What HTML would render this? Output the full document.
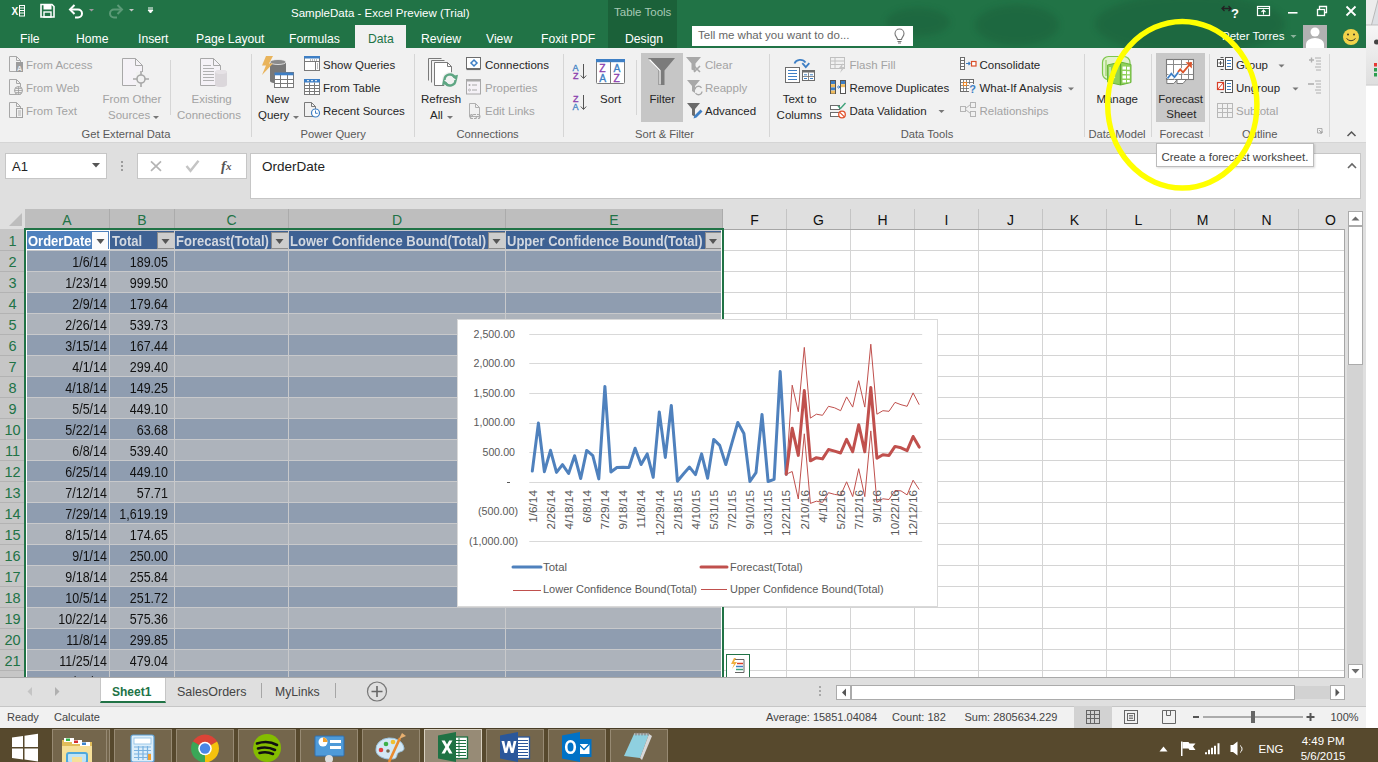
<!DOCTYPE html><html><head><meta charset="utf-8"><title>SampleData - Excel</title><style>
*{margin:0;padding:0;box-sizing:border-box}
html,body{width:1378px;height:762px;overflow:hidden;background:#fff}
body{position:relative;font-family:"Liberation Sans",sans-serif}
.a{position:absolute}
.t{position:absolute;white-space:nowrap;line-height:1}
svg{position:absolute;overflow:visible}
</style></head><body>
<svg class="a" style="left:1366px;top:0" width="12" height="90">
<rect x="0" y="0" width="12" height="25" fill="#ececec"/>
<path d="M5.5 25L12 0v25z" fill="#dde0e4"/>
<path d="M5.5 25L12 0" stroke="#b9b9b9" stroke-width="1"/>
<rect x="0" y="24.5" width="12" height="1.2" fill="#bdbdbd"/>
<defs><linearGradient id="rg" x1="0" y1="0" x2="0" y2="1"><stop offset="0" stop-color="#f6f6f6"/><stop offset="1" stop-color="#dedede"/></linearGradient></defs>
<rect x="0" y="25.7" width="12" height="59" fill="url(#rg)"/>
<rect x="0" y="84.5" width="12" height="1" fill="#c4c4c4"/>
<circle cx="10.5" cy="42" r="2.5" fill="#444"/>
<rect x="8" y="63" width="3" height="3.5" fill="#e53935"/>
<rect x="8" y="68" width="3" height="3.5" fill="#2e9e4f"/>
<rect x="8" y="73" width="3" height="3.5" fill="#2e9e4f"/>
</svg>
<div class="a" style="left:0;top:0;width:1366px;height:48px;background:#217346"></div>
<svg class="a" style="left:0;top:0" width="1366" height="48"><defs><filter id="bl" x="-50%" y="-50%" width="200%" height="200%"><feGaussianBlur stdDeviation="3"/></filter></defs>
<g fill="#174f30" opacity="0.28" filter="url(#bl)">
<ellipse cx="918" cy="22" rx="32" ry="14"/>
<ellipse cx="1017" cy="25" rx="42" ry="20"/>
<ellipse cx="1190" cy="24" rx="95" ry="30"/>
</g></svg>
<div class="a" style="left:608px;top:0;width:69px;height:48px;background:#1b6139"></div>
<div class="a" style="left:355px;top:25px;width:51px;height:23px;background:#f1f1f1"></div>
<div class="t" style="left:291px;top:7.8px;font-size:11.5px;color:#fff;font-weight:normal;">SampleData - Excel Preview (Trial)</div>
<div class="t" style="left:614px;top:7px;font-size:11.5px;color:#a8c9b5;font-weight:normal;">Table Tools</div>
<div class="t" style="left:20px;top:33px;font-size:12.2px;color:#fff;font-weight:normal;">File</div>
<div class="t" style="left:76px;top:33px;font-size:12.2px;color:#fff;font-weight:normal;">Home</div>
<div class="t" style="left:138px;top:33px;font-size:12.2px;color:#fff;font-weight:normal;">Insert</div>
<div class="t" style="left:196px;top:33px;font-size:12.2px;color:#fff;font-weight:normal;">Page Layout</div>
<div class="t" style="left:289px;top:33px;font-size:12.2px;color:#fff;font-weight:normal;">Formulas</div>
<div class="t" style="left:368px;top:33px;font-size:12.2px;color:#217346;font-weight:normal;">Data</div>
<div class="t" style="left:421px;top:33px;font-size:12.2px;color:#fff;font-weight:normal;">Review</div>
<div class="t" style="left:486px;top:33px;font-size:12.2px;color:#fff;font-weight:normal;">View</div>
<div class="t" style="left:541px;top:33px;font-size:12.2px;color:#fff;font-weight:normal;">Foxit PDF</div>
<div class="t" style="left:625px;top:33px;font-size:12.2px;color:#fff;font-weight:normal;">Design</div>
<div class="a" style="left:692px;top:26px;width:221px;height:20px;background:#fff"></div>
<div class="t" style="left:698px;top:30px;font-size:11.5px;color:#666;font-weight:normal;">Tell me what you want to do...</div>
<div class="t" style="left:1222px;top:31.47px;font-size:11.5px;color:#fff;font-weight:normal;">Peter Torres</div>
<div class="a" style="left:0;top:48px;width:1366px;height:95px;background:#f1f1f1;border-bottom:1px solid #d5d5d5"></div>
<div class="a" style="left:641px;top:53px;width:42px;height:69px;background:#c6c6c6"></div>
<div class="a" style="left:1156px;top:53px;width:49px;height:69px;background:#c8c8c8"></div>
<div class="t" style="left:26px;top:59.97px;font-size:11.5px;color:#a3a3a3;font-weight:normal;">From Access</div>
<div class="t" style="left:26px;top:82.97px;font-size:11.5px;color:#a3a3a3;font-weight:normal;">From Web</div>
<div class="t" style="left:26px;top:105.97px;font-size:11.5px;color:#a3a3a3;font-weight:normal;">From Text</div>
<div class="t" style="left:102.5px;top:93.97px;font-size:11.5px;color:#a3a3a3;font-weight:normal;">From Other</div>
<div class="t" style="left:108px;top:109.97px;font-size:11.5px;color:#a3a3a3;font-weight:normal;">Sources</div>
<div class="t" style="left:191.5px;top:93.97px;font-size:11.5px;color:#a3a3a3;font-weight:normal;">Existing</div>
<div class="t" style="left:177px;top:109.97px;font-size:11.5px;color:#a3a3a3;font-weight:normal;">Connections</div>
<div class="t" style="left:266px;top:93.97px;font-size:11.5px;color:#262626;font-weight:normal;">New</div>
<div class="t" style="left:258px;top:109.97px;font-size:11.5px;color:#262626;font-weight:normal;">Query</div>
<div class="t" style="left:323px;top:59.97px;font-size:11.5px;color:#262626;font-weight:normal;">Show Queries</div>
<div class="t" style="left:323px;top:82.97px;font-size:11.5px;color:#262626;font-weight:normal;">From Table</div>
<div class="t" style="left:323px;top:105.97px;font-size:11.5px;color:#262626;font-weight:normal;">Recent Sources</div>
<div class="t" style="left:421px;top:93.97px;font-size:11.5px;color:#262626;font-weight:normal;">Refresh</div>
<div class="t" style="left:430px;top:109.97px;font-size:11.5px;color:#262626;font-weight:normal;">All</div>
<div class="t" style="left:485px;top:59.97px;font-size:11.5px;color:#262626;font-weight:normal;">Connections</div>
<div class="t" style="left:485px;top:82.97px;font-size:11.5px;color:#a3a3a3;font-weight:normal;">Properties</div>
<div class="t" style="left:485px;top:105.97px;font-size:11.5px;color:#a3a3a3;font-weight:normal;">Edit Links</div>
<div class="t" style="left:600px;top:93.97px;font-size:11.5px;color:#262626;font-weight:normal;">Sort</div>
<div class="t" style="left:649.5px;top:93.97px;font-size:11.5px;color:#262626;font-weight:normal;">Filter</div>
<div class="t" style="left:705px;top:59.97px;font-size:11.5px;color:#a3a3a3;font-weight:normal;">Clear</div>
<div class="t" style="left:705px;top:82.97px;font-size:11.5px;color:#a3a3a3;font-weight:normal;">Reapply</div>
<div class="t" style="left:705px;top:105.97px;font-size:11.5px;color:#262626;font-weight:normal;">Advanced</div>
<div class="t" style="left:782.7px;top:93.97px;font-size:11.5px;color:#262626;font-weight:normal;">Text to</div>
<div class="t" style="left:776.6px;top:109.97px;font-size:11.5px;color:#262626;font-weight:normal;">Columns</div>
<div class="t" style="left:849.5px;top:59.97px;font-size:11.5px;color:#a3a3a3;font-weight:normal;">Flash Fill</div>
<div class="t" style="left:849.5px;top:82.97px;font-size:11.5px;color:#262626;font-weight:normal;">Remove Duplicates</div>
<div class="t" style="left:849.5px;top:105.97px;font-size:11.5px;color:#262626;font-weight:normal;">Data Validation</div>
<div class="t" style="left:979.5px;top:59.97px;font-size:11.5px;color:#262626;font-weight:normal;">Consolidate</div>
<div class="t" style="left:979.5px;top:82.97px;font-size:11.5px;color:#262626;font-weight:normal;">What-If Analysis</div>
<div class="t" style="left:979.5px;top:105.97px;font-size:11.5px;color:#a3a3a3;font-weight:normal;">Relationships</div>
<div class="t" style="left:1096.4px;top:93.97px;font-size:11.5px;color:#262626;font-weight:normal;">Manage</div>
<div class="t" style="left:1158.3px;top:93.97px;font-size:11.5px;color:#262626;font-weight:normal;">Forecast</div>
<div class="t" style="left:1166.3px;top:108.97px;font-size:11.5px;color:#262626;font-weight:normal;">Sheet</div>
<div class="t" style="left:1236px;top:59.97px;font-size:11.5px;color:#262626;font-weight:normal;">Group</div>
<div class="t" style="left:1236px;top:82.97px;font-size:11.5px;color:#262626;font-weight:normal;">Ungroup</div>
<div class="t" style="left:1236px;top:105.97px;font-size:11.5px;color:#a3a3a3;font-weight:normal;">Subtotal</div>
<div class="t" style="left:81.5px;top:129.22px;font-size:11.2px;color:#595959;font-weight:normal;">Get External Data</div>
<div class="t" style="left:300.6px;top:129.22px;font-size:11.2px;color:#595959;font-weight:normal;">Power Query</div>
<div class="t" style="left:456.5px;top:129.22px;font-size:11.2px;color:#595959;font-weight:normal;">Connections</div>
<div class="t" style="left:635px;top:129.22px;font-size:11.2px;color:#595959;font-weight:normal;">Sort &amp; Filter</div>
<div class="t" style="left:900.7px;top:129.22px;font-size:11.2px;color:#595959;font-weight:normal;">Data Tools</div>
<div class="t" style="left:1088.4px;top:129.22px;font-size:11.2px;color:#595959;font-weight:normal;">Data Model</div>
<div class="t" style="left:1159.5px;top:129.22px;font-size:11.2px;color:#595959;font-weight:normal;">Forecast</div>
<div class="t" style="left:1242px;top:129.22px;font-size:11.2px;color:#595959;font-weight:normal;">Outline</div>
<svg class="a" style="left:0;top:0" width="1366" height="200">
<text x="11.5" y="15" font-family="Liberation Sans" font-weight="bold" font-size="10" fill="#fff">X</text>
<rect x="19.5" y="5.5" width="5" height="10.5" fill="none" stroke="#fff" stroke-width="1"/>
<path d="M19.5 8h5M19.5 10.5h5M19.5 13h5" stroke="#fff" stroke-width="1"/>
<path d="M41 4.5h11l2 2v10.5h-13z" fill="none" stroke="#fff" stroke-width="1.6"/>
<rect x="43.5" y="5" width="8" height="4.5" fill="#fff"/>
<rect x="44" y="12" width="7" height="5" fill="none" stroke="#fff" stroke-width="1.4"/>
<path d="M71 9.5h7a4 4 0 0 1 0 8h-3" fill="none" stroke="#fff" stroke-width="2"/>
<path d="M74.5 5l-4.5 4.5 4.5 4.5" fill="none" stroke="#fff" stroke-width="2"/>
<path d="M89 9h5l-2.5 2.5z" fill="#a09aa0"/>
<path d="M121 9.5h-7a4 4 0 0 0 0 8h3" fill="none" stroke="#5c9a77" stroke-width="2"/>
<path d="M117.5 5l4.5 4.5-4.5 4.5" fill="none" stroke="#5c9a77" stroke-width="2"/>
<path d="M129 9h5l-2.5 2.5z" fill="#c8c8c8"/>
<path d="M148 8h5M148 10h5l-2.5 3z" stroke="#fff" fill="#fff" stroke-width="1"/>
<path d="M1222 8.5h9M1224.5 6l-2.5 2.5 2.5 2.5M1228.5 6l2.5 2.5-2.5 2.5" fill="none" stroke="#222" stroke-width="1.3"/>
<text x="1231" y="17.5" font-family="Liberation Sans" font-weight="bold" font-size="13" fill="#fff">?</text>
<rect x="1257.5" y="6.5" width="12" height="9" fill="none" stroke="#fff" stroke-width="1.2"/>
<path d="M1257.5 8.5h12M1263.5 14.5v-4M1261.5 12l2-2 2 2" fill="none" stroke="#fff" stroke-width="1.1"/>
<rect x="1288" y="12" width="9.5" height="1.6" fill="#fff"/>
<rect x="1317.5" y="9.5" width="7" height="6" fill="none" stroke="#fff" stroke-width="1.3"/>
<path d="M1319.5 9.5v-3h7v6h-2" fill="none" stroke="#fff" stroke-width="1.3"/>
<path d="M1346.5 6.5l9 9M1355.5 6.5l-9 9" stroke="#fff" stroke-width="1.8"/>
<rect x="1303" y="25" width="24" height="23" fill="#b1b1b1"/>
<circle cx="1315" cy="32" r="4.5" fill="#fff"/>
<path d="M1306 48v-4a9 6 0 0 1 18 0v4z" fill="#fff"/>
<path d="M1290.5 35h6l-3 3z" fill="#8bb39c"/>
<circle cx="1351" cy="37" r="8" fill="#f2d34a"/>
<circle cx="1348" cy="34.5" r="1" fill="#3a3a2a"/><circle cx="1354" cy="34.5" r="1" fill="#3a3a2a"/>
<path d="M1346.5 38.5q4.5 4.5 9 0" fill="none" stroke="#3a3a2a" stroke-width="1"/>
<path d="M897.5 39.5c0-2-2.5-3-2.5-6a4.5 4.5 0 0 1 9 0c0 3-2.5 4-2.5 6z" fill="none" stroke="#777" stroke-width="1.1"/>
<path d="M897.5 41.5h4M898 43h3" stroke="#777" stroke-width="1"/>
<line x1="251.5" y1="54" x2="251.5" y2="137" stroke="#d6d6d6" stroke-width="1"/>
<line x1="170.5" y1="60" x2="170.5" y2="115" stroke="#d6d6d6" stroke-width="1"/>
<line x1="414.5" y1="54" x2="414.5" y2="137" stroke="#d6d6d6" stroke-width="1"/>
<line x1="563.5" y1="54" x2="563.5" y2="137" stroke="#d6d6d6" stroke-width="1"/>
<line x1="636.5" y1="60" x2="636.5" y2="115" stroke="#d6d6d6" stroke-width="1"/>
<line x1="769.5" y1="54" x2="769.5" y2="137" stroke="#d6d6d6" stroke-width="1"/>
<line x1="1084.5" y1="54" x2="1084.5" y2="137" stroke="#d6d6d6" stroke-width="1"/>
<line x1="1151.5" y1="54" x2="1151.5" y2="137" stroke="#d6d6d6" stroke-width="1"/>
<line x1="1209.5" y1="54" x2="1209.5" y2="137" stroke="#d6d6d6" stroke-width="1"/>
<line x1="1329.5" y1="54" x2="1329.5" y2="137" stroke="#d6d6d6" stroke-width="1"/>
<path d="M9.5 56.5h7l4 4v11h-11z M16.5 56.5v4h4" fill="none" stroke="#a8a8a8" stroke-width="1"/>
<rect x="16" y="62" width="7" height="10" fill="#9c9c9c"/>
<text x="17" y="70.5" font-family="Liberation Sans" font-size="7" font-weight="bold" fill="#eee">A</text>
<path d="M9.5 79.5h7l4 4v11h-11z M16.5 79.5v4h4" fill="none" stroke="#a8a8a8" stroke-width="1"/>
<circle cx="18.5" cy="90.5" r="4" fill="#f1f1f1" stroke="#a0a0a0" stroke-width="1"/>
<path d="M14.5 90.5h8M18.5 86.5v8M15.5 88.5h6M15.5 92.5h6" stroke="#a0a0a0" stroke-width=".8" fill="none"/>
<path d="M9.5 102.5h7l4 4v11h-11z M16.5 102.5v4h4" fill="none" stroke="#a8a8a8" stroke-width="1"/>
<rect x="16.5" y="108.5" width="6" height="9" fill="#f1f1f1" stroke="#a0a0a0" stroke-width="1"/>
<path d="M18 111h3M18 113h3M18 115h3" stroke="#a0a0a0" stroke-width=".8"/>
<path d="M122.5 58.5h13l7 7v20h-20z" fill="#f5f2f7" stroke="#a8a8a8" stroke-width="1"/>
<path d="M135.5 58.5v7h7" fill="none" stroke="#a8a8a8" stroke-width="1"/>
<rect x="136" y="72" width="12" height="14" fill="#f1f1f1"/>
<circle cx="141" cy="79" r="4" fill="#f1f1f1" stroke="#a8a8a8" stroke-width="1.6"/>
<path d="M133 79h4M145 79h4M141 71v4M141 83v4" stroke="#a8a8a8" stroke-width="1.6"/>
<path d="M200.5 58.5h13l7 7v20h-20z" fill="#f5f2f7" stroke="#a8a8a8" stroke-width="1"/>
<path d="M213.5 58.5v7h7" fill="none" stroke="#a8a8a8" stroke-width="1"/>
<path d="M203 65.5h8M203 68.5h11M203 71.5h11M203 74.5h11M203 77.5h11M203 80.5h11" stroke="#a8a8a8" stroke-width="0.9"/>
<path d="M215 72a6 2 0 0 1 12 0v13a6 2 0 0 1 -12 0z" fill="#dbd7db"/>
<ellipse cx="221" cy="72" rx="6" ry="2" fill="#e6e2e6"/>
<path d="M270 62v19a8 2.5 0 0 0 16 0v-19z" fill="#787878"/>
<ellipse cx="278" cy="62" rx="8" ry="2.5" fill="#8a8a8a" stroke="#f1f1f1" stroke-width=".8"/>
<path d="M266 56h7l-4 7.5h4l-11 11.5 4-9.5h-4z" fill="#e9b45c"/>
<rect x="274.5" y="72.5" width="19" height="15" fill="#fff" stroke="#7a7a7a" stroke-width="1"/>
<rect x="274.5" y="72.5" width="19" height="2.8" fill="#3e7fc5"/>
<path d="M274.5 79.5h19M274.5 83.5h19M280.5 75v12.5M287.5 75v12.5" stroke="#7a7a7a" stroke-width="1"/>
<rect x="304.5" y="56.5" width="15" height="14" fill="#fff" stroke="#7a7a7a" stroke-width="1"/>
<rect x="304" y="56" width="16" height="2.5" fill="#3e7fc5"/>
<path d="M304.5 61.5h15M315.5 61.5v9M310 60h1M312 60h1M314 60h1M316 60h1M317 64h1M317 66h1M317 68h1" stroke="#7a7a7a" stroke-width="1"/>
<rect x="304.5" y="79.5" width="15" height="15" fill="#fff" stroke="#7a7a7a" stroke-width="1"/>
<rect x="304" y="79" width="16" height="3.5" fill="#3e7fc5"/>
<path d="M307 80.7h2M311 80.7h2M315 80.7h2" stroke="#fff" stroke-width="1"/>
<path d="M304.5 85.5h15M304.5 88.5h15M304.5 91.5h15M309.5 82.5v12M314.5 82.5v12" stroke="#7a7a7a" stroke-width="1"/>
<path d="M304.5 102.5h7l4 4v10h-11z M311.5 102.5v4h4" fill="none" stroke="#7a7a7a" stroke-width="1"/>
<circle cx="315.5" cy="113" r="4" fill="#fff" stroke="#3e7fc5" stroke-width="1.2"/>
<path d="M315.5 110.5v2.8h2.2" fill="none" stroke="#3e7fc5" stroke-width="1"/>
<path d="M428.5 58.5h13M428.5 58.5v22" fill="none" stroke="#7a7a7a" stroke-width="1"/>
<path d="M431.5 60.5h13M431.5 60.5v22" fill="none" stroke="#7a7a7a" stroke-width="1"/>
<path d="M434.5 62.5h13l4 4v19h-17z" fill="#fff" stroke="#7a7a7a" stroke-width="1"/>
<path d="M447.5 62.5v4h4" fill="none" stroke="#7a7a7a" stroke-width="1"/>
<circle cx="450" cy="80" r="7" fill="#f1f1f1"/>
<circle cx="450" cy="80" r="8" fill="#f1f1f1"/>
<path d="M444.5 80a5.5 5.5 0 0 1 10.3-2.7" fill="none" stroke="#5ea683" stroke-width="2.4"/>
<path d="M455.5 80a5.5 5.5 0 0 1 -10.3 2.7" fill="none" stroke="#5ea683" stroke-width="2.4"/>
<path d="M452 76.3l6-1.5 -1.2 6z" fill="#5ea683"/>
<path d="M448 83.7l-6 1.5 1.2-6z" fill="#5ea683"/>
<rect x="466.5" y="57.5" width="14" height="11" fill="#fff" stroke="#6d6d6d" stroke-width="1"/>
<path d="M466.5 69.5h14" stroke="#6d6d6d" stroke-width="1.2"/>
<path d="M474 60l3 3-3 3-3-3z" fill="none" stroke="#3e7fc5" stroke-width="1.5"/>
<rect x="466.5" y="79.5" width="14" height="14.5" fill="#f5f2f7" stroke="#a8a8a8" stroke-width="1"/>
<rect x="466.5" y="79.5" width="14" height="2" fill="#a8a8a8"/>
<circle cx="469.5" cy="85" r="1" fill="#a8a8a8"/><circle cx="469.5" cy="90" r="1" fill="none" stroke="#a8a8a8" stroke-width=".8"/>
<path d="M472 85h5M472 90h5" stroke="#a8a8a8" stroke-width="1"/>
<path d="M469.5 103.5h6l4 4v9h-10z M475.5 103.5v4h4" fill="none" stroke="#b0b0b0" stroke-width="1"/>
<path d="M472 116.5a2 2 0 0 1 2-2h2M478 116.5a2 2 0 0 0 -2 2h-2M473 118.5h-1a2 2 0 0 1 0-4M477 114.5h1a2 2 0 0 1 0 4" fill="none" stroke="#a8a8a8" stroke-width="1.1"/>
<text x="572.6" y="70.8" font-family="Liberation Sans" font-size="9" stroke="#3e7fc5" stroke-width=".3" fill="#3e7fc5">A</text>
<text x="573" y="78.8" font-family="Liberation Sans" font-size="9" stroke="#8b3fae" stroke-width=".3" fill="#8b3fae">Z</text>
<path d="M583.5 64v14M580.8 75.5l2.7 3 2.7-3" fill="none" stroke="#555" stroke-width="1"/>
<text x="573" y="102" font-family="Liberation Sans" font-size="9" stroke="#8b3fae" stroke-width=".3" fill="#8b3fae">Z</text>
<text x="572.6" y="110" font-family="Liberation Sans" font-size="9" stroke="#3e7fc5" stroke-width=".3" fill="#3e7fc5">A</text>
<path d="M583.5 95v14M580.8 106.5l2.7 3 2.7-3" fill="none" stroke="#555" stroke-width="1"/>
<rect x="596.5" y="59.5" width="28" height="24" rx="1" fill="#fff" stroke="#7a7a7a" stroke-width="1"/>
<rect x="596" y="59" width="29" height="3.2" fill="#3e7fc5"/>
<path d="M610.5 62v21.5" stroke="#7a7a7a" stroke-width="1"/>
<text x="599.3" y="72" font-family="Liberation Sans" font-size="10.3" stroke="#8b3fae" stroke-width="0.35" fill="#8b3fae">Z</text>
<text x="599.3" y="82.2" font-family="Liberation Sans" font-size="10.3" stroke="#3e7fc5" stroke-width="0.35" fill="#3e7fc5">A</text>
<text x="613.5" y="72" font-family="Liberation Sans" font-size="10.3" stroke="#3e7fc5" stroke-width="0.35" fill="#3e7fc5">A</text>
<text x="613.5" y="82.2" font-family="Liberation Sans" font-size="10.3" stroke="#8b3fae" stroke-width="0.35" fill="#8b3fae">Z</text>
<path d="M648 58h27l-10.5 12.5v14.5h-6v-14.5z" fill="#7b7b7b"/>
<path d="M649.5 59.5l10.5 11v14" fill="none" stroke="#fff" stroke-width="1.2"/>
<path d="M686 57h15l-5.5 6.5v8l-4-2v-6z" fill="#a8a8a8"/>
<path d="M694 66l6 6M700 66l-6 6" stroke="#a8a8a8" stroke-width="1.6"/>
<path d="M687 80h13l-5 6v7l-3-2v-5z" fill="#a8a8a8"/>
<path d="M695 89.5a3.5 3.5 0 0 1 6.5-1.5M702 91.5a3.5 3.5 0 0 1 -6.5 1.5" fill="none" stroke="#a8a8a8" stroke-width="1.3"/>
<path d="M687 103h13l-5 6v8l-3-2v-6z" fill="#6b6b6b"/>
<path d="M693.5 118.5l1-3 6-6 2 2-6 6z" fill="#3e7fc5"/>
<rect x="785.5" y="67.5" width="14" height="15" fill="#fff" stroke="#6d6d6d" stroke-width="1"/>
<path d="M788 70.5h9M788 73.5h9M788 76.5h9M788 79.5h9" stroke="#3e7fc5" stroke-width="1"/>
<rect x="802.5" y="70.5" width="12" height="10" fill="#fff" stroke="#6d6d6d" stroke-width="1"/>
<rect x="802.5" y="70.5" width="12" height="2" fill="#6d6d6d"/>
<path d="M808.5 72.5v8M802.5 76.5h12" stroke="#6d6d6d" stroke-width=".8"/>
<path d="M804 74.8h3M810 74.8h3M804 78.5h3M810 78.5h3" stroke="#3e7fc5" stroke-width="1"/>
<path d="M794.5 63.5a6 5 0 0 1 11 -1" fill="none" stroke="#3e7fc5" stroke-width="1.8"/>
<path d="M802.3 63.2l3.5 4 3.5-4" fill="none" stroke="#3e7fc5" stroke-width="1.8"/>
<rect x="830.5" y="57.5" width="14" height="11" fill="none" stroke="#c0c0c0" stroke-width="1"/>
<path d="M830.5 61h14M830.5 64.5h14M835 57.5v11" stroke="#c0c0c0" stroke-width="1"/>
<path d="M843 63l-4 5h3l-2 5 5-6h-3z" fill="#c4c4c4"/>
<rect x="830.5" y="80.5" width="5" height="13" fill="#fff" stroke="#555" stroke-width="1"/>
<rect x="831" y="81" width="4" height="3" fill="#3e7fc5"/><rect x="831" y="84.2" width="4" height="3" fill="#f0bc5e"/><rect x="831" y="87.4" width="4" height="3" fill="#3e7fc5"/><rect x="831" y="90.6" width="4" height="3" fill="#f0bc5e"/>
<rect x="840.5" y="80.5" width="5" height="13" fill="#fff" stroke="#555" stroke-width="1"/>
<rect x="841" y="81" width="4" height="3" fill="#3e7fc5"/><rect x="841" y="84.2" width="4" height="3" fill="#f0bc5e"/>
<path d="M837 87h3M838.5 85.5l1.5 1.5-1.5 1.5" fill="none" stroke="#3e7fc5" stroke-width="1"/>
<rect x="830.5" y="105.5" width="9" height="4" fill="#fff" stroke="#6d6d6d" stroke-width="1"/>
<rect x="830.5" y="112.5" width="9" height="4" fill="#fff" stroke="#6d6d6d" stroke-width="1"/>
<path d="M838 106l2.5 2.5 5-5.5" fill="none" stroke="#3fa37a" stroke-width="1.4"/>
<circle cx="842" cy="114.5" r="3.3" fill="#fff" stroke="#e0502a" stroke-width="1.3"/>
<path d="M839.8 112.3l4.4 4.4" stroke="#e0502a" stroke-width="1.2"/>
<rect x="960.5" y="57.5" width="4" height="12" fill="#fff" stroke="#6d6d6d" stroke-width="1"/>
<path d="M960.5 60.5h4M960.5 63.5h4M960.5 66.5h4" stroke="#6d6d6d" stroke-width="1"/>
<path d="M966 63.5h4M968.5 62l1.5 1.5-1.5 1.5" fill="none" stroke="#3e7fc5" stroke-width="1.1"/>
<rect x="971.5" y="61.5" width="4.5" height="4.5" fill="#fff" stroke="#d9502a" stroke-width="1.2"/>
<rect x="960.5" y="79.5" width="13" height="12" fill="#fff" stroke="#6d6d6d" stroke-width="1"/>
<path d="M960.5 82.5h13M960.5 85.5h13M960.5 88.5h13M963.5 79.5v12M966.5 79.5v12M969.5 79.5v12" stroke="#6d6d6d" stroke-width=".8"/>
<rect x="963.5" y="82.5" width="3" height="3" fill="#fff" stroke="#e8862a" stroke-width="1.1"/>
<rect x="969" y="84" width="8" height="11" fill="#f1f1f1"/>
<text x="969.3" y="93" font-family="Liberation Sans" font-weight="bold" font-size="11" fill="#3e7fc5">?</text>
<rect x="960.5" y="106.5" width="5" height="5" fill="none" stroke="#b4b4b4" stroke-width="1"/>
<rect x="970.5" y="102.5" width="5" height="5" fill="none" stroke="#b4b4b4" stroke-width="1"/>
<rect x="970.5" y="111.5" width="5" height="5" fill="none" stroke="#b4b4b4" stroke-width="1"/>
<path d="M965.5 108.5l5-4M965.5 109.5l5 4" stroke="#b4b4b4" stroke-width="1"/>
<rect x="1102.5" y="56.5" width="27.5" height="23" rx="6" fill="#e2f2cf" stroke="#7ec64e" stroke-width="1.2"/>
<path d="M1106 60v16" stroke="#b5de8e" stroke-width="2"/>
<path d="M1107.5 65l13-3 10.5 2.5v18l-10.5 2.5-13-3z" fill="#8fd05a" stroke="#6ab63a" stroke-width="1"/>
<path d="M1120.5 62v23" stroke="#5aa92e" stroke-width="1.4"/>
<path d="M1122.5 66.5h3.5v3h-3.5zM1127 66.8h2.8v3h-2.8zM1122.5 71h3.5v3h-3.5zM1127 71.2h2.8v3h-2.8zM1122.5 75.5h3.5v3h-3.5zM1127 75.6h2.8v3h-2.8zM1122.5 80h3.5v2.5h-3.5zM1127 80h2.8v2.3h-2.8z" fill="#fff"/>
<path d="M1110 67v8a3 3 0 0 0 5 2" fill="none" stroke="#e8f5da" stroke-width="1.2"/>
<rect x="1166.5" y="59.5" width="27" height="20" fill="#fff" stroke="#7a7a7a" stroke-width="1.1"/>
<path d="M1166.5 64.5h27M1166.5 74.5h27M1173.5 59.5v20M1181.5 59.5v20M1188.5 59.5v20" stroke="#8a8a8a" stroke-width="1"/>
<path d="M1166.8 80v3.5h7l3-3.5M1177 80v3.5h6l3-3.5" fill="#fff" stroke="#7a7a7a" stroke-width="1"/>
<path d="M1167.5 78.5l3.8-4.8 3.2 3.5 3.8-5" fill="none" stroke="#fff" stroke-width="3.4"/>
<path d="M1178 72l2.2-2.6 2.8 3 8.5-10" fill="none" stroke="#fff" stroke-width="3.4"/>
<path d="M1167.5 78.5l3.8-4.8 3.2 3.5 3.8-5" fill="none" stroke="#3e7fc5" stroke-width="1.8"/>
<path d="M1178 72l2.2-2.6 2.8 3 8.5-10" fill="none" stroke="#d9542b" stroke-width="1.8"/>
<path d="M1185.5 62.3h6.3v6.3z" fill="#d9542b"/>
<rect x="1217.5" y="59.5" width="6" height="7" fill="#fff" stroke="#555" stroke-width="1"/>
<path d="M1218.5 63h4M1220.5 61v4" stroke="#555" stroke-width="1"/>
<path d="M1220.5 57.5h3M1220.5 69.5h3" stroke="#555" stroke-width="1"/>
<rect x="1225.5" y="57.5" width="7" height="12" fill="#fff" stroke="#555" stroke-width="1"/>
<path d="M1227 60.5h4M1227 63.5h4M1227 66.5h4" stroke="#3e7fc5" stroke-width="1"/>
<rect x="1217.5" y="82.5" width="6" height="7" fill="#fff" stroke="#d9402a" stroke-width="1.2"/>
<path d="M1218 89l5-6" stroke="#d9402a" stroke-width="1"/>
<path d="M1220.5 80.5h3M1220.5 92.5h3" stroke="#555" stroke-width="1"/>
<rect x="1225.5" y="80.5" width="7" height="12" fill="#fff" stroke="#555" stroke-width="1"/>
<path d="M1227 83.5h4M1227 86.5h4M1227 89.5h4" stroke="#3e7fc5" stroke-width="1"/>
<rect x="1217.5" y="103.5" width="15" height="14" fill="none" stroke="#b8b8b8" stroke-width="1"/>
<path d="M1222.5 103.5v14M1227.5 103.5v14M1217.5 108.5h15M1217.5 112.5h15" stroke="#b8b8b8" stroke-width="1"/>
<path d="M1309 60h5M1311.5 57.5v5" stroke="#b0b0b0" stroke-width="1.4"/>
<path d="M1315 58h6M1316 61h5M1316 64h5M1315 67h6M1316 70h5" stroke="#b0b0b0" stroke-width="1"/>
<path d="M1308 84h6" stroke="#b0b0b0" stroke-width="1.6"/>
<path d="M1315 81h6M1316 84h5M1316 87h5M1315 90h6M1316 93h5" stroke="#b0b0b0" stroke-width="1"/>
<path d="M1317.5 128.5h4.5v4.5h-4.5z" fill="none" stroke="#a0a0a0" stroke-width=".8"/>
<path d="M1319 130l3 3M1322 131v2h-2" fill="none" stroke="#a0a0a0" stroke-width=".9"/>
<path d="M1347.5 136l4-4 4 4" fill="none" stroke="#555" stroke-width="1.5"/>
<path d="M153 116h6l-3 3z" fill="#777"/>
<path d="M293 116h6l-3 3z" fill="#777"/>
<path d="M447 116h6l-3 3z" fill="#777"/>
<path d="M938.5 110h6l-3 3z" fill="#777"/>
<path d="M1068 87.5h6l-3 3z" fill="#777"/>
<path d="M1278.5 64.5h6l-3 3z" fill="#777"/>
<path d="M1292.5 87.5h6l-3 3z" fill="#777"/>
</svg>
<div class="a" style="left:0;top:143px;width:1366px;height:66px;background:#dfdfdf"></div>
<div class="a" style="left:5px;top:153px;width:102px;height:26px;background:#fff;border:1px solid #c6c6c6"></div>
<div class="t" style="left:12px;top:160px;font-size:13px;color:#222;font-weight:normal;">A1</div>
<div class="a" style="left:137px;top:153px;width:110px;height:26px;background:#fff;border:1px solid #c6c6c6"></div>
<div class="a" style="left:250px;top:153px;width:1111px;height:46px;background:#fff;border:1px solid #c6c6c6"></div>
<div class="t" style="left:262px;top:159.5px;font-size:13.5px;color:#222;font-weight:normal;">OrderDate</div>
<svg class="a" style="left:0;top:140px" width="1366" height="70">
<path d="M92 25h8l-4 4.5z" fill="#555" transform="translate(0,-2)"/>
<rect x="121" y="21" width="2" height="2" fill="#9c9c9c"/>
<rect x="121" y="25" width="2" height="2" fill="#9c9c9c"/>
<rect x="121" y="29" width="2" height="2" fill="#9c9c9c"/>
<path d="M151 21.3l10 9.5M161 21.3l-10 9.5" stroke="#b4b4b4" stroke-width="1.7"/>
<path d="M186.5 26l4 4.8 8-10" fill="none" stroke="#c4c4c4" stroke-width="2.4"/>
<text x="221" y="30.5" font-family="Liberation Serif" font-style="italic" font-weight="bold" font-size="14.5" fill="#555">f</text>
<text x="226" y="29.5" font-family="Liberation Serif" font-style="italic" font-weight="bold" font-size="11" fill="#555">x</text>
<path d="M1348 28l4-4 4 4" fill="none" stroke="#666" stroke-width="1.6"/>
</svg>
<svg class="a" style="left:0;top:0" width="1366" height="762" shape-rendering="crispEdges">
<rect x="0" y="209" width="1345" height="20" fill="#dfdfdf"/>
<rect x="25" y="209" width="698" height="20" fill="#bebebe"/>
<polygon points="9,226 22,226 22,213" fill="#bdbdbd" shape-rendering="auto"/>
<rect x="109" y="209" width="1" height="20" fill="#ababab"/>
<rect x="174" y="209" width="1" height="20" fill="#ababab"/>
<rect x="288" y="209" width="1" height="20" fill="#ababab"/>
<rect x="505" y="209" width="1" height="20" fill="#ababab"/>
<rect x="722" y="209" width="1" height="20" fill="#ababab"/>
<rect x="786" y="209" width="1" height="20" fill="#c4c4c4"/>
<rect x="850" y="209" width="1" height="20" fill="#c4c4c4"/>
<rect x="914" y="209" width="1" height="20" fill="#c4c4c4"/>
<rect x="978" y="209" width="1" height="20" fill="#c4c4c4"/>
<rect x="1042" y="209" width="1" height="20" fill="#c4c4c4"/>
<rect x="1106" y="209" width="1" height="20" fill="#c4c4c4"/>
<rect x="1170" y="209" width="1" height="20" fill="#c4c4c4"/>
<rect x="1234" y="209" width="1" height="20" fill="#c4c4c4"/>
<rect x="1298" y="209" width="1" height="20" fill="#c4c4c4"/>
<rect x="24" y="209" width="1" height="20" fill="#dfdfdf"/>
<rect x="723" y="229" width="622" height="1" fill="#a6a6a6"/>
<rect x="0" y="229" width="24" height="449" fill="#c6c6c6"/>
<rect x="0" y="250" width="24" height="1" fill="#b3b3b3"/>
<rect x="0" y="271" width="24" height="1" fill="#b3b3b3"/>
<rect x="0" y="292" width="24" height="1" fill="#b3b3b3"/>
<rect x="0" y="313" width="24" height="1" fill="#b3b3b3"/>
<rect x="0" y="334" width="24" height="1" fill="#b3b3b3"/>
<rect x="0" y="355" width="24" height="1" fill="#b3b3b3"/>
<rect x="0" y="376" width="24" height="1" fill="#b3b3b3"/>
<rect x="0" y="397" width="24" height="1" fill="#b3b3b3"/>
<rect x="0" y="418" width="24" height="1" fill="#b3b3b3"/>
<rect x="0" y="439" width="24" height="1" fill="#b3b3b3"/>
<rect x="0" y="460" width="24" height="1" fill="#b3b3b3"/>
<rect x="0" y="481" width="24" height="1" fill="#b3b3b3"/>
<rect x="0" y="502" width="24" height="1" fill="#b3b3b3"/>
<rect x="0" y="523" width="24" height="1" fill="#b3b3b3"/>
<rect x="0" y="544" width="24" height="1" fill="#b3b3b3"/>
<rect x="0" y="565" width="24" height="1" fill="#b3b3b3"/>
<rect x="0" y="586" width="24" height="1" fill="#b3b3b3"/>
<rect x="0" y="607" width="24" height="1" fill="#b3b3b3"/>
<rect x="0" y="628" width="24" height="1" fill="#b3b3b3"/>
<rect x="0" y="649" width="24" height="1" fill="#b3b3b3"/>
<rect x="0" y="670" width="24" height="1" fill="#b3b3b3"/>
<rect x="0" y="691" width="24" height="1" fill="#b3b3b3"/>
<rect x="723" y="230" width="622" height="448" fill="#ffffff"/>
<rect x="26" y="251" width="696" height="20" fill="#8f9db0"/>
<rect x="26" y="272" width="696" height="20" fill="#adb3bb"/>
<rect x="26" y="293" width="696" height="20" fill="#8f9db0"/>
<rect x="26" y="314" width="696" height="20" fill="#adb3bb"/>
<rect x="26" y="335" width="696" height="20" fill="#8f9db0"/>
<rect x="26" y="356" width="696" height="20" fill="#adb3bb"/>
<rect x="26" y="377" width="696" height="20" fill="#8f9db0"/>
<rect x="26" y="398" width="696" height="20" fill="#adb3bb"/>
<rect x="26" y="419" width="696" height="20" fill="#8f9db0"/>
<rect x="26" y="440" width="696" height="20" fill="#adb3bb"/>
<rect x="26" y="461" width="696" height="20" fill="#8f9db0"/>
<rect x="26" y="482" width="696" height="20" fill="#adb3bb"/>
<rect x="26" y="503" width="696" height="20" fill="#8f9db0"/>
<rect x="26" y="524" width="696" height="20" fill="#adb3bb"/>
<rect x="26" y="545" width="696" height="20" fill="#8f9db0"/>
<rect x="26" y="566" width="696" height="20" fill="#adb3bb"/>
<rect x="26" y="587" width="696" height="20" fill="#8f9db0"/>
<rect x="26" y="608" width="696" height="20" fill="#adb3bb"/>
<rect x="26" y="629" width="696" height="20" fill="#8f9db0"/>
<rect x="26" y="650" width="696" height="20" fill="#adb3bb"/>
<rect x="26" y="671" width="696" height="20" fill="#8f9db0"/>
<rect x="26" y="230" width="696" height="21" fill="#c8c9cb"/>
<rect x="27" y="231" width="694" height="18" fill="#3e6193"/>
<rect x="26" y="271" width="696" height="1" fill="#c8c9cb"/>
<rect x="26" y="292" width="696" height="1" fill="#c8c9cb"/>
<rect x="26" y="313" width="696" height="1" fill="#c8c9cb"/>
<rect x="26" y="334" width="696" height="1" fill="#c8c9cb"/>
<rect x="26" y="355" width="696" height="1" fill="#c8c9cb"/>
<rect x="26" y="376" width="696" height="1" fill="#c8c9cb"/>
<rect x="26" y="397" width="696" height="1" fill="#c8c9cb"/>
<rect x="26" y="418" width="696" height="1" fill="#c8c9cb"/>
<rect x="26" y="439" width="696" height="1" fill="#c8c9cb"/>
<rect x="26" y="460" width="696" height="1" fill="#c8c9cb"/>
<rect x="26" y="481" width="696" height="1" fill="#c8c9cb"/>
<rect x="26" y="502" width="696" height="1" fill="#c8c9cb"/>
<rect x="26" y="523" width="696" height="1" fill="#c8c9cb"/>
<rect x="26" y="544" width="696" height="1" fill="#c8c9cb"/>
<rect x="26" y="565" width="696" height="1" fill="#c8c9cb"/>
<rect x="26" y="586" width="696" height="1" fill="#c8c9cb"/>
<rect x="26" y="607" width="696" height="1" fill="#c8c9cb"/>
<rect x="26" y="628" width="696" height="1" fill="#c8c9cb"/>
<rect x="26" y="649" width="696" height="1" fill="#c8c9cb"/>
<rect x="26" y="670" width="696" height="1" fill="#c8c9cb"/>
<rect x="26" y="691" width="696" height="1" fill="#c8c9cb"/>
<rect x="109" y="231" width="1" height="447" fill="#c8c9cb"/>
<rect x="174" y="231" width="1" height="447" fill="#c8c9cb"/>
<rect x="288" y="231" width="1" height="447" fill="#c8c9cb"/>
<rect x="505" y="231" width="1" height="447" fill="#c8c9cb"/>
<rect x="723" y="250" width="622" height="1" fill="#d4d4d4"/>
<rect x="723" y="271" width="622" height="1" fill="#d4d4d4"/>
<rect x="723" y="292" width="622" height="1" fill="#d4d4d4"/>
<rect x="723" y="313" width="622" height="1" fill="#d4d4d4"/>
<rect x="723" y="334" width="622" height="1" fill="#d4d4d4"/>
<rect x="723" y="355" width="622" height="1" fill="#d4d4d4"/>
<rect x="723" y="376" width="622" height="1" fill="#d4d4d4"/>
<rect x="723" y="397" width="622" height="1" fill="#d4d4d4"/>
<rect x="723" y="418" width="622" height="1" fill="#d4d4d4"/>
<rect x="723" y="439" width="622" height="1" fill="#d4d4d4"/>
<rect x="723" y="460" width="622" height="1" fill="#d4d4d4"/>
<rect x="723" y="481" width="622" height="1" fill="#d4d4d4"/>
<rect x="723" y="502" width="622" height="1" fill="#d4d4d4"/>
<rect x="723" y="523" width="622" height="1" fill="#d4d4d4"/>
<rect x="723" y="544" width="622" height="1" fill="#d4d4d4"/>
<rect x="723" y="565" width="622" height="1" fill="#d4d4d4"/>
<rect x="723" y="586" width="622" height="1" fill="#d4d4d4"/>
<rect x="723" y="607" width="622" height="1" fill="#d4d4d4"/>
<rect x="723" y="628" width="622" height="1" fill="#d4d4d4"/>
<rect x="723" y="649" width="622" height="1" fill="#d4d4d4"/>
<rect x="723" y="670" width="622" height="1" fill="#d4d4d4"/>
<rect x="723" y="691" width="622" height="1" fill="#d4d4d4"/>
<rect x="786" y="230" width="1" height="448" fill="#d4d4d4"/>
<rect x="850" y="230" width="1" height="448" fill="#d4d4d4"/>
<rect x="914" y="230" width="1" height="448" fill="#d4d4d4"/>
<rect x="978" y="230" width="1" height="448" fill="#d4d4d4"/>
<rect x="1042" y="230" width="1" height="448" fill="#d4d4d4"/>
<rect x="1106" y="230" width="1" height="448" fill="#d4d4d4"/>
<rect x="1170" y="230" width="1" height="448" fill="#d4d4d4"/>
<rect x="1234" y="230" width="1" height="448" fill="#d4d4d4"/>
<rect x="1298" y="230" width="1" height="448" fill="#d4d4d4"/>
<rect x="1344" y="229" width="1" height="449" fill="#a6a6a6"/>
<rect x="26" y="230" width="84" height="20" fill="#ffffff"/>
<rect x="27" y="231" width="82" height="18" fill="#4f81bd"/>
<rect x="92" y="232" width="16" height="17" fill="#fbfbfc"/>
<polygon points="96.5,239 104.5,239 100.5,244" fill="#555" shape-rendering="auto"/>
<rect x="157" y="232" width="17" height="17" fill="#8c8c8c"/>
<rect x="158" y="233" width="16" height="15" fill="#cdcdcd"/>
<polygon points="161.5,239 169.5,239 165.5,244" fill="#555" shape-rendering="auto"/>
<rect x="271" y="232" width="17" height="17" fill="#8c8c8c"/>
<rect x="272" y="233" width="16" height="15" fill="#cdcdcd"/>
<polygon points="275.5,239 283.5,239 279.5,244" fill="#555" shape-rendering="auto"/>
<rect x="488" y="232" width="17" height="17" fill="#8c8c8c"/>
<rect x="489" y="233" width="16" height="15" fill="#cdcdcd"/>
<polygon points="492.5,239 500.5,239 496.5,244" fill="#555" shape-rendering="auto"/>
<rect x="705" y="232" width="16" height="17" fill="#8c8c8c"/>
<rect x="706" y="233" width="15" height="15" fill="#cdcdcd"/>
<polygon points="709.0,239 717.0,239 713.0,244" fill="#555" shape-rendering="auto"/>
<rect x="24" y="228" width="700" height="2" fill="#217346"/>
<rect x="24" y="228" width="2" height="450" fill="#217346"/>
<rect x="722" y="228" width="2" height="450" fill="#217346"/>
<rect x="26" y="230" width="1" height="448" fill="#ffffff"/>
<rect x="721" y="230" width="1" height="448" fill="#ffffff"/>
</svg>
<div class="t" style="left:25px;top:213px;width:84px;text-align:center;font-size:14px;color:#217346">A</div>
<div class="t" style="left:110px;top:213px;width:64px;text-align:center;font-size:14px;color:#217346">B</div>
<div class="t" style="left:175px;top:213px;width:113px;text-align:center;font-size:14px;color:#217346">C</div>
<div class="t" style="left:289px;top:213px;width:216px;text-align:center;font-size:14px;color:#217346">D</div>
<div class="t" style="left:506px;top:213px;width:216px;text-align:center;font-size:14px;color:#217346">E</div>
<div class="t" style="left:723px;top:213px;width:63px;text-align:center;font-size:14px;color:#111">F</div>
<div class="t" style="left:787px;top:213px;width:63px;text-align:center;font-size:14px;color:#111">G</div>
<div class="t" style="left:851px;top:213px;width:63px;text-align:center;font-size:14px;color:#111">H</div>
<div class="t" style="left:915px;top:213px;width:63px;text-align:center;font-size:14px;color:#111">I</div>
<div class="t" style="left:979px;top:213px;width:63px;text-align:center;font-size:14px;color:#111">J</div>
<div class="t" style="left:1043px;top:213px;width:63px;text-align:center;font-size:14px;color:#111">K</div>
<div class="t" style="left:1107px;top:213px;width:63px;text-align:center;font-size:14px;color:#111">L</div>
<div class="t" style="left:1171px;top:213px;width:63px;text-align:center;font-size:14px;color:#111">M</div>
<div class="t" style="left:1235px;top:213px;width:63px;text-align:center;font-size:14px;color:#111">N</div>
<div class="t" style="left:1299px;top:213px;width:63px;text-align:center;font-size:14px;color:#111">O</div>
<div class="t" style="left:0.5px;top:233.5px;width:24px;text-align:center;font-size:14.5px;color:#217346">1</div>
<div class="t" style="left:0.5px;top:254.5px;width:24px;text-align:center;font-size:14.5px;color:#217346">2</div>
<div class="t" style="left:0.5px;top:275.5px;width:24px;text-align:center;font-size:14.5px;color:#217346">3</div>
<div class="t" style="left:0.5px;top:296.5px;width:24px;text-align:center;font-size:14.5px;color:#217346">4</div>
<div class="t" style="left:0.5px;top:317.5px;width:24px;text-align:center;font-size:14.5px;color:#217346">5</div>
<div class="t" style="left:0.5px;top:338.5px;width:24px;text-align:center;font-size:14.5px;color:#217346">6</div>
<div class="t" style="left:0.5px;top:359.5px;width:24px;text-align:center;font-size:14.5px;color:#217346">7</div>
<div class="t" style="left:0.5px;top:380.5px;width:24px;text-align:center;font-size:14.5px;color:#217346">8</div>
<div class="t" style="left:0.5px;top:401.5px;width:24px;text-align:center;font-size:14.5px;color:#217346">9</div>
<div class="t" style="left:0.5px;top:422.5px;width:24px;text-align:center;font-size:14.5px;color:#217346">10</div>
<div class="t" style="left:0.5px;top:443.5px;width:24px;text-align:center;font-size:14.5px;color:#217346">11</div>
<div class="t" style="left:0.5px;top:464.5px;width:24px;text-align:center;font-size:14.5px;color:#217346">12</div>
<div class="t" style="left:0.5px;top:485.5px;width:24px;text-align:center;font-size:14.5px;color:#217346">13</div>
<div class="t" style="left:0.5px;top:506.5px;width:24px;text-align:center;font-size:14.5px;color:#217346">14</div>
<div class="t" style="left:0.5px;top:527.5px;width:24px;text-align:center;font-size:14.5px;color:#217346">15</div>
<div class="t" style="left:0.5px;top:548.5px;width:24px;text-align:center;font-size:14.5px;color:#217346">16</div>
<div class="t" style="left:0.5px;top:569.5px;width:24px;text-align:center;font-size:14.5px;color:#217346">17</div>
<div class="t" style="left:0.5px;top:590.5px;width:24px;text-align:center;font-size:14.5px;color:#217346">18</div>
<div class="t" style="left:0.5px;top:611.5px;width:24px;text-align:center;font-size:14.5px;color:#217346">19</div>
<div class="t" style="left:0.5px;top:632.5px;width:24px;text-align:center;font-size:14.5px;color:#217346">20</div>
<div class="t" style="left:0.5px;top:653.5px;width:24px;text-align:center;font-size:14.5px;color:#217346">21</div>
<div class="t" style="left:0.5px;top:674.5px;width:24px;text-align:center;font-size:14.5px;color:#217346">22</div>
<div class="t" style="left:28px;top:234.5px;font-size:13px;font-weight:bold;color:#fff;transform:scaleY(1.18);transform-origin:0 11px">OrderDate</div>
<div class="t" style="left:112px;top:234.5px;font-size:13px;font-weight:bold;color:#d3d8e0;transform:scaleY(1.18);transform-origin:0 11px">Total</div>
<div class="t" style="left:176px;top:234.5px;font-size:13px;font-weight:bold;color:#d3d8e0;transform:scaleY(1.18);transform-origin:0 11px">Forecast(Total)</div>
<div class="t" style="left:290px;top:234.5px;font-size:13px;font-weight:bold;color:#d3d8e0;transform:scaleY(1.18);transform-origin:0 11px">Lower Confidence Bound(Total)</div>
<div class="t" style="left:507px;top:234.5px;font-size:13px;font-weight:bold;color:#d3d8e0;transform:scaleY(1.18);transform-origin:0 11px">Upper Confidence Bound(Total)</div>
<div class="t" style="left:27px;top:256.8px;width:80px;text-align:right;font-size:12.5px;color:#111;transform:scaleY(1.1);transform-origin:0 10.6px">1/6/14</div>
<div class="t" style="left:110px;top:256.8px;width:58px;text-align:right;font-size:12.5px;color:#111;transform:scaleY(1.1);transform-origin:0 10.6px">189.05</div>
<div class="t" style="left:27px;top:277.8px;width:80px;text-align:right;font-size:12.5px;color:#111;transform:scaleY(1.1);transform-origin:0 10.6px">1/23/14</div>
<div class="t" style="left:110px;top:277.8px;width:58px;text-align:right;font-size:12.5px;color:#111;transform:scaleY(1.1);transform-origin:0 10.6px">999.50</div>
<div class="t" style="left:27px;top:298.8px;width:80px;text-align:right;font-size:12.5px;color:#111;transform:scaleY(1.1);transform-origin:0 10.6px">2/9/14</div>
<div class="t" style="left:110px;top:298.8px;width:58px;text-align:right;font-size:12.5px;color:#111;transform:scaleY(1.1);transform-origin:0 10.6px">179.64</div>
<div class="t" style="left:27px;top:319.8px;width:80px;text-align:right;font-size:12.5px;color:#111;transform:scaleY(1.1);transform-origin:0 10.6px">2/26/14</div>
<div class="t" style="left:110px;top:319.8px;width:58px;text-align:right;font-size:12.5px;color:#111;transform:scaleY(1.1);transform-origin:0 10.6px">539.73</div>
<div class="t" style="left:27px;top:340.8px;width:80px;text-align:right;font-size:12.5px;color:#111;transform:scaleY(1.1);transform-origin:0 10.6px">3/15/14</div>
<div class="t" style="left:110px;top:340.8px;width:58px;text-align:right;font-size:12.5px;color:#111;transform:scaleY(1.1);transform-origin:0 10.6px">167.44</div>
<div class="t" style="left:27px;top:361.8px;width:80px;text-align:right;font-size:12.5px;color:#111;transform:scaleY(1.1);transform-origin:0 10.6px">4/1/14</div>
<div class="t" style="left:110px;top:361.8px;width:58px;text-align:right;font-size:12.5px;color:#111;transform:scaleY(1.1);transform-origin:0 10.6px">299.40</div>
<div class="t" style="left:27px;top:382.8px;width:80px;text-align:right;font-size:12.5px;color:#111;transform:scaleY(1.1);transform-origin:0 10.6px">4/18/14</div>
<div class="t" style="left:110px;top:382.8px;width:58px;text-align:right;font-size:12.5px;color:#111;transform:scaleY(1.1);transform-origin:0 10.6px">149.25</div>
<div class="t" style="left:27px;top:403.8px;width:80px;text-align:right;font-size:12.5px;color:#111;transform:scaleY(1.1);transform-origin:0 10.6px">5/5/14</div>
<div class="t" style="left:110px;top:403.8px;width:58px;text-align:right;font-size:12.5px;color:#111;transform:scaleY(1.1);transform-origin:0 10.6px">449.10</div>
<div class="t" style="left:27px;top:424.8px;width:80px;text-align:right;font-size:12.5px;color:#111;transform:scaleY(1.1);transform-origin:0 10.6px">5/22/14</div>
<div class="t" style="left:110px;top:424.8px;width:58px;text-align:right;font-size:12.5px;color:#111;transform:scaleY(1.1);transform-origin:0 10.6px">63.68</div>
<div class="t" style="left:27px;top:445.8px;width:80px;text-align:right;font-size:12.5px;color:#111;transform:scaleY(1.1);transform-origin:0 10.6px">6/8/14</div>
<div class="t" style="left:110px;top:445.8px;width:58px;text-align:right;font-size:12.5px;color:#111;transform:scaleY(1.1);transform-origin:0 10.6px">539.40</div>
<div class="t" style="left:27px;top:466.8px;width:80px;text-align:right;font-size:12.5px;color:#111;transform:scaleY(1.1);transform-origin:0 10.6px">6/25/14</div>
<div class="t" style="left:110px;top:466.8px;width:58px;text-align:right;font-size:12.5px;color:#111;transform:scaleY(1.1);transform-origin:0 10.6px">449.10</div>
<div class="t" style="left:27px;top:487.8px;width:80px;text-align:right;font-size:12.5px;color:#111;transform:scaleY(1.1);transform-origin:0 10.6px">7/12/14</div>
<div class="t" style="left:110px;top:487.8px;width:58px;text-align:right;font-size:12.5px;color:#111;transform:scaleY(1.1);transform-origin:0 10.6px">57.71</div>
<div class="t" style="left:27px;top:508.8px;width:80px;text-align:right;font-size:12.5px;color:#111;transform:scaleY(1.1);transform-origin:0 10.6px">7/29/14</div>
<div class="t" style="left:110px;top:508.8px;width:58px;text-align:right;font-size:12.5px;color:#111;transform:scaleY(1.1);transform-origin:0 10.6px">1,619.19</div>
<div class="t" style="left:27px;top:529.8px;width:80px;text-align:right;font-size:12.5px;color:#111;transform:scaleY(1.1);transform-origin:0 10.6px">8/15/14</div>
<div class="t" style="left:110px;top:529.8px;width:58px;text-align:right;font-size:12.5px;color:#111;transform:scaleY(1.1);transform-origin:0 10.6px">174.65</div>
<div class="t" style="left:27px;top:550.8px;width:80px;text-align:right;font-size:12.5px;color:#111;transform:scaleY(1.1);transform-origin:0 10.6px">9/1/14</div>
<div class="t" style="left:110px;top:550.8px;width:58px;text-align:right;font-size:12.5px;color:#111;transform:scaleY(1.1);transform-origin:0 10.6px">250.00</div>
<div class="t" style="left:27px;top:571.8px;width:80px;text-align:right;font-size:12.5px;color:#111;transform:scaleY(1.1);transform-origin:0 10.6px">9/18/14</div>
<div class="t" style="left:110px;top:571.8px;width:58px;text-align:right;font-size:12.5px;color:#111;transform:scaleY(1.1);transform-origin:0 10.6px">255.84</div>
<div class="t" style="left:27px;top:592.8px;width:80px;text-align:right;font-size:12.5px;color:#111;transform:scaleY(1.1);transform-origin:0 10.6px">10/5/14</div>
<div class="t" style="left:110px;top:592.8px;width:58px;text-align:right;font-size:12.5px;color:#111;transform:scaleY(1.1);transform-origin:0 10.6px">251.72</div>
<div class="t" style="left:27px;top:613.8px;width:80px;text-align:right;font-size:12.5px;color:#111;transform:scaleY(1.1);transform-origin:0 10.6px">10/22/14</div>
<div class="t" style="left:110px;top:613.8px;width:58px;text-align:right;font-size:12.5px;color:#111;transform:scaleY(1.1);transform-origin:0 10.6px">575.36</div>
<div class="t" style="left:27px;top:634.8px;width:80px;text-align:right;font-size:12.5px;color:#111;transform:scaleY(1.1);transform-origin:0 10.6px">11/8/14</div>
<div class="t" style="left:110px;top:634.8px;width:58px;text-align:right;font-size:12.5px;color:#111;transform:scaleY(1.1);transform-origin:0 10.6px">299.85</div>
<div class="t" style="left:27px;top:655.8px;width:80px;text-align:right;font-size:12.5px;color:#111;transform:scaleY(1.1);transform-origin:0 10.6px">11/25/14</div>
<div class="t" style="left:110px;top:655.8px;width:58px;text-align:right;font-size:12.5px;color:#111;transform:scaleY(1.1);transform-origin:0 10.6px">479.04</div>
<div class="t" style="left:27px;top:676.8px;width:80px;text-align:right;font-size:12.5px;color:#111;transform:scaleY(1.1);transform-origin:0 10.6px">12/12/14</div>
<div class="t" style="left:110px;top:676.8px;width:58px;text-align:right;font-size:12.5px;color:#111;transform:scaleY(1.1);transform-origin:0 10.6px">86.42</div>
<svg class="a" style="left:457px;top:319px" width="481" height="288">
<rect x="0.5" y="0.5" width="480" height="287" fill="#fff" stroke="#d9d9d9"/>
<line x1="72.3" y1="15.5" x2="465.2" y2="15.5" stroke="#d9d9d9" stroke-width="1"/>
<line x1="72.3" y1="44.5" x2="465.2" y2="44.5" stroke="#d9d9d9" stroke-width="1"/>
<line x1="72.3" y1="74.5" x2="465.2" y2="74.5" stroke="#d9d9d9" stroke-width="1"/>
<line x1="72.3" y1="104.5" x2="465.2" y2="104.5" stroke="#d9d9d9" stroke-width="1"/>
<line x1="72.3" y1="133.5" x2="465.2" y2="133.5" stroke="#d9d9d9" stroke-width="1"/>
<line x1="72.3" y1="163.5" x2="465.2" y2="163.5" stroke="#d9d9d9" stroke-width="1"/>
<line x1="72.3" y1="192.5" x2="465.2" y2="192.5" stroke="#d9d9d9" stroke-width="1"/>
<line x1="72.3" y1="222.5" x2="465.2" y2="222.5" stroke="#d9d9d9" stroke-width="1"/>
<path d="M329.2,155.2 L335.2,66.2 L341.3,92.7 L347.3,28.4 L353.4,99.1 L359.4,95.2 L365.5,96.3 L371.5,87.3 L377.6,88.8 L383.6,91.7 L389.6,77.9 L395.7,88.1 L401.7,61.7 L407.8,88.1 L413.8,25.2 L419.9,95.2 L425.9,91.7 L432.0,92.3 L438.0,83.4 L444.0,85.7 L450.1,87.3 L456.1,73.9 L462.2,85.7" fill="none" stroke="#c0504d" stroke-width="1" stroke-linejoin="round"/>
<path d="M329.2,155.2 L335.2,152.5 L341.3,180.0 L347.3,114.8 L353.4,184.4 L359.4,182.2 L365.5,183.4 L371.5,173.7 L377.6,175.4 L383.6,176.3 L389.6,162.8 L395.7,177.6 L401.7,149.7 L407.8,177.6 L413.8,111.9 L419.9,183.3 L425.9,179.8 L432.0,180.5 L438.0,171.5 L444.0,171.9 L450.1,175.9 L456.1,161.2 L462.2,170.5" fill="none" stroke="#c0504d" stroke-width="1" stroke-linejoin="round"/>
<path d="M75.3,152.1 L81.4,104.1 L87.4,152.7 L93.5,131.3 L99.5,153.4 L105.5,145.6 L111.6,154.5 L117.6,136.7 L123.7,159.5 L129.7,131.4 L135.8,136.7 L141.8,159.9 L147.9,67.4 L153.9,153.0 L159.9,148.5 L166.0,148.2 L172.0,148.4 L178.1,129.2 L184.1,145.5 L190.2,134.9 L196.2,158.4 L202.3,92.9 L208.3,138.4 L214.3,86.4 L220.4,162.2 L226.4,155.0 L232.5,148.1 L238.5,155.6 L244.6,134.9 L250.6,159.2 L256.7,120.4 L262.7,126.4 L268.8,145.5 L274.8,124.3 L280.8,103.5 L286.9,114.5 L292.9,162.5 L299.0,153.7 L305.0,95.5 L311.1,162.5 L317.1,160.4 L323.2,52.5 L329.2,155.2" fill="none" stroke="#4f81bd" stroke-width="3" stroke-linejoin="round" stroke-linecap="round"/>
<path d="M329.2,155.2 L335.2,109.3 L341.3,136.4 L347.3,71.6 L353.4,141.8 L359.4,138.7 L365.5,139.9 L371.5,130.5 L377.6,132.1 L383.6,134.0 L389.6,120.3 L395.7,132.8 L401.7,105.7 L407.8,132.8 L413.8,68.5 L419.9,139.2 L425.9,135.7 L432.0,136.4 L438.0,127.4 L444.0,128.8 L450.1,131.6 L456.1,117.5 L462.2,128.1" fill="none" stroke="#c0504d" stroke-width="3" stroke-linejoin="round" stroke-linecap="round"/>
<line x1="56" y1="248" x2="84" y2="248" stroke="#4f81bd" stroke-width="3" stroke-linecap="round"/>
<line x1="244" y1="248" x2="270" y2="248" stroke="#c0504d" stroke-width="3" stroke-linecap="round"/>
<line x1="56" y1="271.5" x2="84" y2="271.5" stroke="#c0504d" stroke-width="1"/>
<line x1="244" y1="270.5" x2="270" y2="270.5" stroke="#c0504d" stroke-width="1"/>
<text x="16.5" y="18.5" textLength="41.5" lengthAdjust="spacingAndGlyphs" font-family="Liberation Sans" font-size="11.5" fill="#595959">2,500.00</text>
<text x="16.5" y="48.1" textLength="41.5" lengthAdjust="spacingAndGlyphs" font-family="Liberation Sans" font-size="11.5" fill="#595959">2,000.00</text>
<text x="16.5" y="77.7" textLength="41.5" lengthAdjust="spacingAndGlyphs" font-family="Liberation Sans" font-size="11.5" fill="#595959">1,500.00</text>
<text x="16.5" y="107.3" textLength="41.5" lengthAdjust="spacingAndGlyphs" font-family="Liberation Sans" font-size="11.5" fill="#595959">1,000.00</text>
<text x="25.5" y="136.9" textLength="32.5" lengthAdjust="spacingAndGlyphs" font-family="Liberation Sans" font-size="11.5" fill="#595959">500.00</text>
<text x="21" y="196.1" textLength="40" lengthAdjust="spacingAndGlyphs" font-family="Liberation Sans" font-size="11.5" fill="#595959">(500.00)</text>
<text x="12" y="225.7" textLength="49" lengthAdjust="spacingAndGlyphs" font-family="Liberation Sans" font-size="11.5" fill="#595959">(1,000.00)</text>
<rect x="50" y="163" width="3" height="1" fill="#595959"/>
<text transform="translate(79.5,171) rotate(-90)" text-anchor="end" font-family="Liberation Sans" font-size="11.8" fill="#595959">1/6/14</text>
<text transform="translate(97.7,171) rotate(-90)" text-anchor="end" font-family="Liberation Sans" font-size="11.8" fill="#595959">2/26/14</text>
<text transform="translate(115.8,171) rotate(-90)" text-anchor="end" font-family="Liberation Sans" font-size="11.8" fill="#595959">4/18/14</text>
<text transform="translate(133.9,171) rotate(-90)" text-anchor="end" font-family="Liberation Sans" font-size="11.8" fill="#595959">6/8/14</text>
<text transform="translate(152.1,171) rotate(-90)" text-anchor="end" font-family="Liberation Sans" font-size="11.8" fill="#595959">7/29/14</text>
<text transform="translate(170.2,171) rotate(-90)" text-anchor="end" font-family="Liberation Sans" font-size="11.8" fill="#595959">9/18/14</text>
<text transform="translate(188.3,171) rotate(-90)" text-anchor="end" font-family="Liberation Sans" font-size="11.8" fill="#595959">11/8/14</text>
<text transform="translate(206.5,171) rotate(-90)" text-anchor="end" font-family="Liberation Sans" font-size="11.8" fill="#595959">12/29/14</text>
<text transform="translate(224.6,171) rotate(-90)" text-anchor="end" font-family="Liberation Sans" font-size="11.8" fill="#595959">2/18/15</text>
<text transform="translate(242.7,171) rotate(-90)" text-anchor="end" font-family="Liberation Sans" font-size="11.8" fill="#595959">4/10/15</text>
<text transform="translate(260.9,171) rotate(-90)" text-anchor="end" font-family="Liberation Sans" font-size="11.8" fill="#595959">5/31/15</text>
<text transform="translate(279.0,171) rotate(-90)" text-anchor="end" font-family="Liberation Sans" font-size="11.8" fill="#595959">7/21/15</text>
<text transform="translate(297.1,171) rotate(-90)" text-anchor="end" font-family="Liberation Sans" font-size="11.8" fill="#595959">9/10/15</text>
<text transform="translate(315.3,171) rotate(-90)" text-anchor="end" font-family="Liberation Sans" font-size="11.8" fill="#595959">10/31/15</text>
<text transform="translate(333.4,171) rotate(-90)" text-anchor="end" font-family="Liberation Sans" font-size="11.8" fill="#595959">12/21/15</text>
<text transform="translate(351.5,171) rotate(-90)" text-anchor="end" font-family="Liberation Sans" font-size="11.8" fill="#595959">2/10/16</text>
<text transform="translate(369.7,171) rotate(-90)" text-anchor="end" font-family="Liberation Sans" font-size="11.8" fill="#595959">4/1/16</text>
<text transform="translate(387.8,171) rotate(-90)" text-anchor="end" font-family="Liberation Sans" font-size="11.8" fill="#595959">5/22/16</text>
<text transform="translate(405.9,171) rotate(-90)" text-anchor="end" font-family="Liberation Sans" font-size="11.8" fill="#595959">7/12/16</text>
<text transform="translate(424.1,171) rotate(-90)" text-anchor="end" font-family="Liberation Sans" font-size="11.8" fill="#595959">9/1/16</text>
<text transform="translate(442.2,171) rotate(-90)" text-anchor="end" font-family="Liberation Sans" font-size="11.8" fill="#595959">10/22/16</text>
<text transform="translate(460.3,171) rotate(-90)" text-anchor="end" font-family="Liberation Sans" font-size="11.8" fill="#595959">12/12/16</text>
<text x="86" y="252" textLength="24" lengthAdjust="spacingAndGlyphs" font-family="Liberation Sans" font-size="11.5" fill="#595959">Total</text>
<text x="273" y="252" textLength="72.7" lengthAdjust="spacingAndGlyphs" font-family="Liberation Sans" font-size="11.5" fill="#595959">Forecast(Total)</text>
<text x="86" y="274" textLength="154" lengthAdjust="spacingAndGlyphs" font-family="Liberation Sans" font-size="11.5" fill="#595959">Lower Confidence Bound(Total)</text>
<text x="273" y="274" textLength="153.6" lengthAdjust="spacingAndGlyphs" font-family="Liberation Sans" font-size="11.5" fill="#595959">Upper Confidence Bound(Total)</text>
</svg>
<div class="a" style="left:726px;top:654px;width:24px;height:24px;background:#fff;border:1px solid #217346"></div>
<svg class="a" style="left:726px;top:654px" width="24" height="24">
<path d="M9 5.5h9v13h-9" fill="none" stroke="#666" stroke-width="1"/>
<path d="M8 4l-3 6h3l-2 5 5-7h-3l2-4z" fill="#f0b040"/>
<path d="M11 9.5h6" stroke="#d9402a" stroke-width="1.5"/>
<path d="M10 12.5h7" stroke="#3e7fc5" stroke-width="1.5"/>
<path d="M10 15.5h7" stroke="#3fa37a" stroke-width="1.5"/>
</svg>
<div class="a" style="left:1345px;top:209px;width:21px;height:469px;background:#dfdfdf"></div>
<div class="a" style="left:1348px;top:211px;width:15px;height:15px;background:#fff;border:1px solid #ababab"></div>
<div class="a" style="left:1347px;top:365px;width:16px;height:299px;background:#d3d3d3"></div>
<div class="a" style="left:1348px;top:226px;width:15px;height:139px;background:#fff;border:1px solid #ababab"></div>
<div class="a" style="left:1348px;top:664px;width:15px;height:15px;background:#fff;border:1px solid #ababab"></div>
<svg class="a" style="left:1348px;top:211px" width="15" height="470"><path d="M3.5 9.5h8l-4-4z" fill="#6d6d6d"/><path d="M3.5 458h8l-4 4.5z" fill="#6d6d6d"/></svg>
<div class="a" style="left:0;top:678px;width:1366px;height:29px;background:#dfdfdf;border-bottom:1px solid #c6c6c6"></div><div class="a" style="left:0;top:677px;width:1345px;height:1px;background:#a9a9a9"></div>
<div class="a" style="left:100px;top:678px;width:66px;height:25px;background:#fff;border:1px solid #c6c6c6;border-top:none;border-bottom:2px solid #217346"></div>
<div class="t" style="left:112px;top:686.04px;font-size:12px;color:#217346;font-weight:bold;">Sheet1</div>
<div class="t" style="left:177px;top:686.12px;font-size:12.5px;color:#444;font-weight:normal;">SalesOrders</div>
<div class="t" style="left:275px;top:686.37px;font-size:12.2px;color:#444;font-weight:normal;">MyLinks</div>
<svg class="a" style="left:0;top:678px" width="1366" height="28">
<path d="M32 9v9l-4.5-4.5z" fill="#c4c4c4"/>
<path d="M55 9v9l4.5-4.5z" fill="#b0b0b0"/>
<line x1="261.5" y1="5" x2="261.5" y2="20" stroke="#a6a6a6"/>
<line x1="335.5" y1="5" x2="335.5" y2="20" stroke="#a6a6a6"/>
<circle cx="377" cy="13.5" r="9.5" fill="none" stroke="#777" stroke-width="1.2"/>
<path d="M371.5 13.5h11M377 8v11" stroke="#666" stroke-width="1.6"/>
<rect x="819" y="8" width="2" height="2" fill="#a8a8a8"/><rect x="819" y="12" width="2" height="2" fill="#a8a8a8"/><rect x="819" y="16" width="2" height="2" fill="#a8a8a8"/>
<rect x="836.5" y="7.5" width="14" height="14" fill="#fff" stroke="#ababab"/>
<path d="M846 10.5v8l-4-4z" fill="#555"/>
<rect x="851.5" y="7.5" width="443" height="14" fill="#fff" stroke="#ababab"/>
<rect x="1295" y="8" width="35" height="13" fill="#d2d2d2"/>
<rect x="1330.5" y="7.5" width="14" height="14" fill="#fff" stroke="#ababab"/>
<path d="M1335.5 10.5v8l4-4z" fill="#555"/>
</svg>
<div class="a" style="left:0;top:707px;width:1366px;height:21px;background:#f1f1f1"></div>
<div class="t" style="left:7px;top:712.39px;font-size:11px;color:#444;font-weight:normal;">Ready</div>
<div class="t" style="left:54px;top:712.39px;font-size:11px;color:#444;font-weight:normal;">Calculate</div>
<div class="t" style="left:766px;top:712.39px;font-size:11px;color:#444;font-weight:normal;">Average: 15851.04084</div>
<div class="t" style="left:892px;top:712.39px;font-size:11px;color:#444;font-weight:normal;">Count: 182</div>
<div class="t" style="left:964.5px;top:712.39px;font-size:11px;color:#444;font-weight:normal;">Sum: 2805634.229</div>
<div class="a" style="left:1074px;top:706px;width:38px;height:22px;background:#d2d2d2"></div>
<div class="t" style="left:1330.5px;top:712.39px;font-size:11px;color:#444;font-weight:normal;">100%</div>
<svg class="a" style="left:0;top:706px" width="1366" height="22">
<rect x="1086.5" y="4.5" width="13" height="13" fill="none" stroke="#666"/>
<path d="M1086.5 8.5h13M1086.5 12.5h13M1090.5 4.5v13M1094.5 4.5v13" stroke="#666"/>
<rect x="1124.5" y="4.5" width="13" height="13" fill="none" stroke="#666"/>
<rect x="1127.5" y="7.5" width="7" height="7" fill="none" stroke="#666"/>
<path d="M1129 9.5h4M1129 11h4M1129 12.5h4" stroke="#666" stroke-width=".8"/>
<path d="M1162.5 4.5h13v13h-13zM1166.5 4.5v5h4v-5" fill="none" stroke="#666"/>
<rect x="1193" y="10" width="6" height="2" fill="#555"/>
<rect x="1203" y="10.5" width="100" height="1" fill="#666"/>
<rect x="1251" y="5" width="4" height="12" fill="#666"/>
<path d="M1306.5 11h8M1310.5 7v8" stroke="#555" stroke-width="2"/>
</svg>
<div class="a" style="left:0;top:728px;width:1378px;height:34px;background:#57492d;border-top:1px solid #4a3e27"></div>
<div class="a" style="left:52px;top:729px;width:58px;height:33px;background:#74664c;border:1px solid #978a73;border-bottom:none"></div>
<div class="a" style="left:114px;top:729px;width:58px;height:33px;background:#74664c;border:1px solid #978a73;border-bottom:none"></div>
<div class="a" style="left:176px;top:729px;width:58px;height:33px;background:#74664c;border:1px solid #978a73;border-bottom:none"></div>
<div class="a" style="left:238px;top:729px;width:58px;height:33px;background:#74664c;border:1px solid #978a73;border-bottom:none"></div>
<div class="a" style="left:300px;top:729px;width:58px;height:33px;background:#74664c;border:1px solid #978a73;border-bottom:none"></div>
<div class="a" style="left:362px;top:729px;width:58px;height:33px;background:#74664c;border:1px solid #978a73;border-bottom:none"></div>
<div class="a" style="left:424px;top:729px;width:58px;height:33px;background:#978b76;border:1px solid #d8d0c0;border-bottom:none"></div>
<div class="a" style="left:486px;top:729px;width:58px;height:33px;background:#74664c;border:1px solid #978a73;border-bottom:none"></div>
<div class="a" style="left:548px;top:729px;width:58px;height:33px;background:#74664c;border:1px solid #978a73;border-bottom:none"></div>
<div class="a" style="left:610px;top:729px;width:58px;height:33px;background:#74664c;border:1px solid #978a73;border-bottom:none"></div>
<div class="a" style="left:106px;top:729px;width:4px;height:33px;background:#74664c;border:1px solid #978a73;border-bottom:none"></div>
<svg class="a" style="left:0;top:728px" width="1378" height="34">
<path d="M12 9.5l11-1.5v11h-11zM24.5 7.8l13.5-2v13.2h-13.5zM12 20.5h11v11l-11-1.5zM24.5 20.5h13.5v13l-13.5-2z" fill="#fff"/>
<path d="M62 12h9l2 2h19v20h-30z" fill="#e2bd5a"/>
<rect x="64" y="10" width="10" height="4" fill="#fff"/><rect x="66" y="10.5" width="4" height="2.5" fill="#2fb64a"/>
<rect x="72" y="12" width="10" height="4" fill="#fff"/><rect x="74" y="12.5" width="4" height="2.5" fill="#d43030"/>
<rect x="80" y="14" width="10" height="4" fill="#fff"/><rect x="82" y="14.5" width="4" height="2.5" fill="#3c86d0"/>
<path d="M62 18h30v16h-30z" fill="#f6e09a"/>
<rect x="67" y="25" width="20" height="10" rx="2" fill="#bfe3f6" stroke="#4fa8dc" stroke-width="2"/>
<rect x="72" y="29" width="10" height="6" fill="#f6e09a"/>
<rect x="131" y="7" width="23" height="27" rx="2" fill="#dceefa" stroke="#5aa0d8" stroke-width="1.2"/>
<rect x="134" y="10" width="17" height="6" fill="#fff" stroke="#8abde6" stroke-width=".8"/>
<path d="M134 19h17M134 22.5h17M134 26h17M134 29.5h17M138.5 18v14M143 18v14M147.5 18v14" stroke="#7ab2e0" stroke-width="1.2"/>
<rect x="148" y="26" width="3" height="6" fill="#f0a030"/>
<path d="M205 20.5L192.88 13.5A14 14 0 0 1 217.12 13.5z" fill="#db4437"/>
<path d="M205 20.5L217.12 13.5A14 14 0 0 1 205 34.5z" fill="#f4c20d"/>
<path d="M205 20.5L205 34.5A14 14 0 0 1 192.88 13.5z" fill="#3aa757"/>
<circle cx="205" cy="20.5" r="6.8" fill="#fff"/><circle cx="205" cy="20.5" r="5.2" fill="#4a87e8"/>
<circle cx="267" cy="20" r="14" fill="#84bd00"/>
<path d="M257 15.5q11-3.5 20 1.5M258 20.5q9-2.5 17 1.5M259.5 25q7-2 13.5 1" fill="none" stroke="#111" stroke-width="2.6" stroke-linecap="round"/>
<rect x="315" y="8" width="29" height="20" rx="1" fill="#4e9ad8" stroke="#2f6fae"/>
<circle cx="323" cy="14" r="4.5" fill="#fff"/><path d="M323 14v-4.5a4.5 4.5 0 0 1 4.5 4.5z" fill="#f0a030"/>
<rect x="330" y="12" width="11" height="3" fill="#fff"/><rect x="330" y="18" width="11" height="3" fill="#fff"/>
<circle cx="329" cy="31" r="4" fill="#ddd"/>
<path d="M376 22a14 11 0 0 1 28-2c0 4-4 3-6 5s0 6-6 6a14 9 0 0 1 -16-9z" fill="#d3e8f5" stroke="#9cc4e0"/>
<circle cx="388" cy="23" r="1.8" fill="#74664c"/>
<circle cx="381" cy="22" r="2.3" fill="#e34040"/><circle cx="386" cy="16" r="2.3" fill="#3cb04a"/><circle cx="393" cy="14" r="2.3" fill="#f0c030"/>
<path d="M389 34l11-24" stroke="#e88a30" stroke-width="2.6"/><path d="M399 11l3-6 4 3z" fill="#e8b070"/>
<rect x="449" y="9" width="18.5" height="21.5" fill="#fff" stroke="#1f7244" stroke-width="1.3"/>
<path d="M452 12.5h14M452 15.5h14M452 18.5h14M452 21.5h14M452 24.5h14M452 27.5h14M459 10v19" stroke="#1f7244" stroke-width="1"/>
<path d="M438 7.5l18-3.5v30l-18-3.5z" fill="#1f7244"/>
<path d="M441.5 12.5h3.3l2.2 4 2.2-4h3.3l-3.8 6.5 3.8 6.5h-3.3l-2.2-4-2.2 4h-3.3l3.8-6.5z" fill="#fff"/>
<rect x="511" y="9" width="18.5" height="21.5" fill="#fff" stroke="#2b579a" stroke-width="1.3"/>
<path d="M514 12.5h14M514 15.5h14M514 18.5h14M514 21.5h14M514 24.5h14M514 27.5h14" stroke="#2b579a" stroke-width="1.1"/>
<path d="M500 7.5l18-3.5v30l-18-3.5z" fill="#2b579a"/>
<path d="M501.5 13h2.8l1.6 7.5 1.9-7.5h2.4l1.9 7.5 1.6-7.5h2.8l-3 12h-2.6l-1.9-7-1.9 7h-2.6z" fill="#fff"/>
<rect x="575" y="11" width="16.5" height="18" fill="#0072c6"/>
<rect x="578.5" y="16" width="11" height="10" fill="#fff"/>
<path d="M578.5 16l5.5 5.5 5.5-5.5" fill="none" stroke="#0072c6" stroke-width="1.5"/>
<path d="M562 7.5l18-3.5v30l-18-3.5z" fill="#0072c6"/>
<ellipse cx="570.5" cy="19" rx="4.3" ry="5.8" fill="none" stroke="#fff" stroke-width="2.6"/>
<path d="M624 28l10-22 h15l-9 24z" fill="#8fd0e0"/>
<path d="M634 6h15" stroke="#bbb" stroke-width="1.5"/>
<path d="M649 6l3 2 -10 24-2-2z" fill="#d8d8d8"/>
<path d="M636 4.5v3M639 4.5v3M642 4.5v3M645 4.5v3M648 4.5v3" stroke="#777" stroke-width="1"/>
<path d="M1159.5 23.5l4-5 4 5z" fill="#fff"/>
<rect x="1181" y="13.5" width="1.5" height="14.5" fill="#fff"/><path d="M1182.5 14h6l1 1.5 h6l-2.5 3 2.5 3.5h-6l-1-1.5h-6z" fill="#fff"/>
<path d="M1205 26.2h2v-2h-2zM1208 26.2h2v-4.5h-2zM1211 26.2h2v-6.5h-2zM1214 26.2h2v-8.5h-2zM1217.5 26.2h2v-11h-2z" fill="#fff"/>
<path d="M1230.5 17h2.5l4.5-3.5v14l-4.5-3.5h-2.5z" fill="#fff"/><path d="M1240 17.5a4 4 0 0 1 0 7" fill="none" stroke="#fff" stroke-width="1"/>
</svg>
<div class="t" style="left:1258.5px;top:743.67px;font-size:11.5px;color:#fff;font-weight:normal;">ENG</div>
<div class="t" style="left:1301.7px;top:735.97px;font-size:11.5px;color:#fff;font-weight:normal;">4:49 PM</div>
<div class="t" style="left:1300.7px;top:751.47px;font-size:11.5px;color:#fff;font-weight:normal;">5/6/2015</div>
<div class="a" style="left:1156px;top:143px;width:158px;height:24px;background:#fff;border:1px solid #bcbcbc;box-shadow:1px 1px 2px rgba(0,0,0,.15)"></div>
<div class="t" style="left:1161.4px;top:151.57px;font-size:11.5px;color:#444;font-weight:normal;">Create a forecast worksheet.</div>
<svg class="a" style="left:0;top:0" width="1378" height="762"><ellipse cx="1182.3" cy="104.8" rx="74.6" ry="83.3" fill="none" stroke="#ffff00" stroke-width="5.5"/></svg>
</body></html>
